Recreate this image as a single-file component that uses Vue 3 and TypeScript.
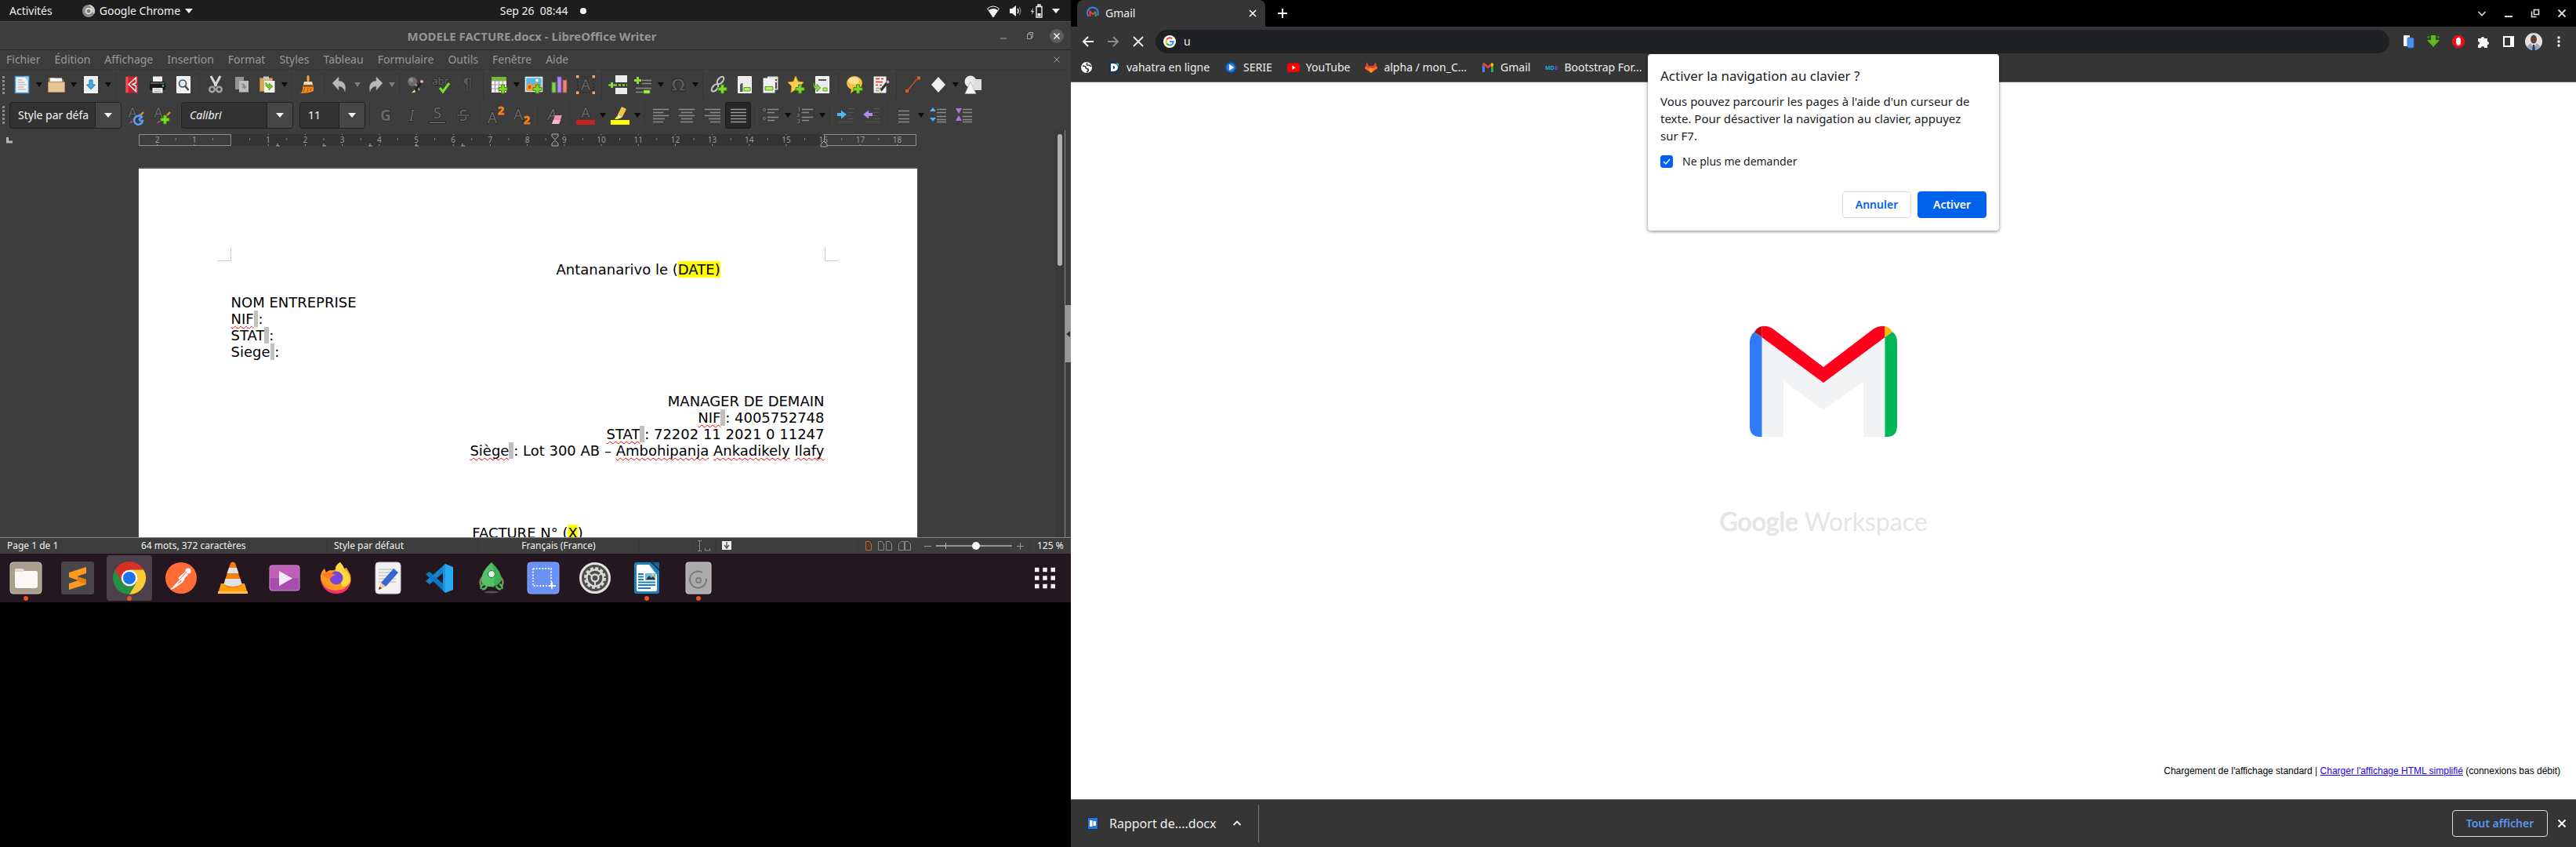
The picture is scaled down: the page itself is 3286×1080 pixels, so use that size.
<script setup lang="ts">
import { ref } from 'vue'

interface Tool { icon?: string; label?: string; menu?: boolean; dim?: boolean; sep?: boolean; active?: boolean }
interface DockApp { icon: string; label: string; running?: boolean; active?: boolean }
interface Bookmark { icon: string; label: string }

const plus = '<path d="M14.5 12h4v3.5H22v4h-3.5V23h-4v-3.5H11v-4h3.5z" fill="#7fd62c" stroke="#3f8a0b"/>'
const glyph = (char: string, x: number, y: number, size: number, extra = '') =>
  `<text x="${x}" y="${y}" text-anchor="middle" font-family="Noto Sans" font-size="${size}" fill="#696969" stroke="#262626" stroke-width="1.4" paint-order="stroke" ${extra}>${char}</text>`

const icons: Record<string, string> = {
  new: '<path d="M3.5 1.5h17v21h-17z" fill="#f2f2f2" stroke="#3f9bdc" stroke-width="1.6"/><path d="M15 1.5h5.5V8z" fill="#8fd0f5"/><path d="M6.5 6h6M6.5 9h9M6.5 12h11M6.5 15h8M6.5 18h11" stroke="#a9a9a9"/>',
  open: '<path d="M2 3h8l1 2h10v3H2z" fill="#a58250"/><path d="M4 3.5h15v6H4z" fill="#f5f5f5"/><path d="M1.5 8.5h21v13h-21z" fill="#e5c591" stroke="#b08b54"/>',
  save: '<path d="M3.5 1.5h17v21h-17z" fill="#efefef" stroke="#fff"/><path d="M10 6h4v6h3.5L12 18l-5.500-6H10z" fill="#43a9e8" stroke="#1b7dbf"/>',
  pdf: '<path d="M4 1.5h16v21H4z" fill="#c9242c"/><path d="M4.5 2h3v20h-3z" fill="#e4525a"/><path d="M17.5 3L8 11.5l9.5 9v-7L13 11.5l4.5-2z" fill="none" stroke="#fff" stroke-width="1.4"/>',
  print: '<path d="M6 1.5h12v8H6z" fill="#f0f0f0"/><rect x="2" y="8" width="20" height="11" rx="2" fill="#181818"/><path d="M3 9h18v2H3z" fill="#5b5b5b"/><circle cx="19" cy="13.5" r="1.3" fill="#35c2f3"/><path d="M5.5 16h13v6.5h-13z" fill="#efefef"/><path d="M7.5 18h9M7.5 20.5h9" stroke="#aaa"/>',
  preview: '<path d="M3.5 1.5h17v21h-17z" fill="#efefef" stroke="#fff"/><circle cx="11" cy="10.5" r="4.5" fill="#dceefa" stroke="#4a4a4a" stroke-width="1.6"/><path d="M14.5 14l4 5" stroke="#4a4a4a" stroke-width="2.4"/>',
  cut: '<path d="M6 1l7 13M18 1l-7 13" stroke="#d9d9d9" stroke-width="3"/><circle cx="7.5" cy="18" r="3.3" fill="none" stroke="#a3a3a3" stroke-width="2.4"/><circle cx="16.5" cy="18" r="3.3" fill="none" stroke="#a3a3a3" stroke-width="2.4"/>',
  copy: '<path d="M4 2h11v16H4z" fill="#929292"/><path d="M9 7h12v14.5H9z" fill="#bdbdbd"/><path d="M10 11q4 0 4 3h-2l4 4 3-4h-2q-1-5-7-3z" fill="#8b8b8b"/>',
  paste: '<path d="M2.5 3.5h16v17h-16z" fill="#d7a95a" stroke="#a47a35"/><path d="M7 1.5h7v4H7z" fill="#c8c8c8"/><path d="M8 7h13.5v15H8z" fill="#f2f2f2"/><path d="M10 9q-1 6 4 7v3l5-5-5-4v3q-2 0-4-4z" fill="#73cc1d" stroke="#3f8a0b" stroke-width=".7"/>',
  brush: '<rect x="10.5" y="0" width="3" height="8" rx="1.5" fill="#f5a33a"/><path d="M7 8h10l1 4H6z" fill="#f3dab2"/><path d="M5 12h14v3H5z" fill="#8a5a2a"/><path d="M5 15h14v5q-5 3-17 3 4-3 3-8z" fill="#f08a1c"/><path d="M8 16l-2 5M12 16l-1 5M16 16l-1 4" stroke="#a5500a"/>',
  undo: '<path d="M10 2v5q11 1 8 14-2-7-8-7v5L2 10z" fill="#b8b8b8" stroke="#8c8c8c" stroke-width=".6"/>',
  redo: '<path d="M14 2v5Q3 8 6 21q2-7 8-7v5l8-9z" fill="#b8b8b8" stroke="#8c8c8c" stroke-width=".6"/>',
  find: '<circle cx="8" cy="8" r="6" fill="#6e6e6e"/><circle cx="6.5" cy="6" r="2.5" fill="#8f8f8f"/><path d="M12 11l5 8" stroke="#9b9b9b" stroke-width="2"/><path d="M20 8l-9 12" stroke="#222" stroke-width="3"/><path d="M11 18l-4 4.5 5-1z" fill="#f5df8a"/><circle cx="20" cy="8" r="2" fill="#e4a7d8"/>',
  spell: glyph('abc', 11, 12, 13) + '<path d="M10 16l4 5 8-11" fill="none" stroke="#7be02c" stroke-width="3"/>',
  para: '<path d="M18 3h-8a5 5 0 000 9h1v10h2V5h2v17h2V5h1z" fill="#5a5a5a" stroke="#2a2a2a" stroke-width=".8"/>',
  table: '<path d="M2 2h19v20H2z" fill="#f1f1f1"/><path d="M2 2h19v5H2z" fill="#6cc21a"/><path d="M2 7h19M2 12h19M2 17h19M6.5 2v20M11.5 2v20M16.5 2v20" stroke="#9c9c9c"/>' + plus,
  image: '<path d="M1.5 2.5h21v18h-21z" fill="#58b7ee" stroke="#eee" stroke-width="1.6"/><path d="M2.5 13l4-3 4 3 5-4 6 5v6h-19z" fill="#f39a2d"/><path d="M5 13h3v4H5z" fill="#d54c1a"/><circle cx="16" cy="6.5" r="2" fill="#fff3b0"/>' + plus,
  chart: '<rect x="2" y="9" width="5" height="13" fill="#7fd24e" stroke="#4b8f22"/><rect x="9" y="2" width="5" height="20" fill="#b58be6" stroke="#7d52b3"/><rect x="16" y="6" width="5" height="16" fill="#e5897d" stroke="#a84b3f"/>',
  frame: '<path d="M2 2h20v20H2z" fill="none" stroke="#1f1f1f" stroke-dasharray="2 2"/>' + glyph('A', 12, 19, 19) + '<path d="M0 0h3.5v3.5H0zM20.5 0H24v3.5h-3.5zM0 20.5h3.5V24H0zM20.5 20.5H24V24h-3.5z" fill="#f4a26a"/>',
  break: '<path d="M9 0h15v9H9zM9 16h15v8H9z" fill="#ececec"/><path d="M8 12.5h16" stroke="#7fd62c" stroke-width="2.4" stroke-dasharray="3 2"/><path d="M3 9h3v2.5h2v2H6V16H3v-2.500H0v-2h3z" fill="#8be03a"/>',
  field: '<path d="M10 6.5h12M10 10.5h12M2 16.5h20M2 21.5h9" stroke="#8c8c8c" stroke-width="1.5"/><path d="M3 2h3v3h3v3H6v3H3V8H0V5h3z" fill="#8be03a"/><path d="M12 19h8v4h-8z" fill="#b5f06a" stroke="#5aa416"/>',
  omega: '<text x="12" y="20" text-anchor="middle" font-family="DejaVu Sans" font-size="22" font-weight="700" fill="#5a5a5a" stroke="#2a2a2a" stroke-width="1">Ω</text>',
  link: '<g fill="none" stroke="#c4c4c4" stroke-width="2.2"><ellipse cx="14" cy="6.5" rx="5.5" ry="3" transform="rotate(-50 14 6.5)"/><ellipse cx="7" cy="16" rx="5.5" ry="3" transform="rotate(-50 7 16)"/></g>' + plus,
  footnote: '<path d="M3.5 1.5h17v21h-17z" fill="#ececec" stroke="#fff"/><path d="M6 12l2-2h1.5v11H6z" fill="#555"/><path d="M11 15.5h8v4.5h-8z" fill="#b5f06a" stroke="#5aa416"/>',
  endnote: '<path d="M8 1.5h13.5v17H8z" fill="#ddd"/><path d="M2.5 3.5h15v19h-15z" fill="#f1f1f1"/><path d="M5 14.5h10V19H5z" fill="#b5f06a" stroke="#5aa416"/><path d="M19 5v2M19 9v8" stroke="#444" stroke-width="2"/>',
  bookmark: '<path d="M11 1l3 7 7 1-5 5 1 8-6-4-6 4 1-8-5-5 7-1z" fill="#fbcf55" stroke="#d79a1c"/>' + plus,
  xref: '<path d="M3.5 1.5h17v21h-17z" fill="#ececec" stroke="#fff"/><path d="M7 6h10" stroke="#555" stroke-width="2"/><path d="M1 9q0 5 4 5v-3l5 5-5 5v-3q-5-1-4-9z" fill="#8bd84a" stroke="#4a9016" stroke-width=".8"/><path d="M13 16h5v4h-5z" fill="#b5f06a" stroke="#5aa416"/>',
  comment: '<path d="M12 1a10 9 0 0110 9q-1 8-10 9l-5 4 1-5Q2 15 2 10a10 9 0 0110-9z" fill="#f5be3e"/><ellipse cx="11" cy="7" rx="7" ry="4.5" fill="#fbe08f"/>' + plus,
  track: '<path d="M3.5 1.5h16v21h-16z" fill="#f1f1f1"/><path d="M6 4.5h5M13 4.5h3M6 8.5h9M6 12.5h3M11 12.5h3" stroke="#d22" stroke-width="1.6"/><path d="M6 16.5h7M6 19.5h4" stroke="#999" stroke-width="1.4"/><path d="M21 9l-9 11" stroke="#333" stroke-width="3.4"/><path d="M12 18l-4 5 6-2z" fill="#f5df8a"/><circle cx="21.5" cy="8.5" r="2" fill="#d69ace"/>',
  line: '<path d="M5 20L19 3.5" stroke="#b9541a" stroke-width="1.6"/><path d="M3 18h4v4H3zM18 1.5h4v4h-4z" fill="#e0620d"/>',
  diamond: '<path d="M12 2l9 10-9 10-9-10z" fill="#efefef"/>',
  shapes: '<circle cx="9" cy="8" r="7.5" fill="#eaeaea"/><path d="M12 5h11v14H12z" fill="#dedede"/><path d="M9 8l7 15.5H2z" fill="#f5f5f5" stroke="#aaa" stroke-width=".7"/>',
  styleUpd: glyph('A', 8, 15, 18) + '<path d="M22 8l-5 5" stroke="#f08a1c" stroke-width="2.4"/><path d="M4 23l5-3-3-1z" fill="#c63fb4"/><path d="M19 14a5.5 5.5 0 102 5h-4M16 11l4 3-4 4" fill="none" stroke="#5b9df2" stroke-width="2.6"/>',
  styleNew: glyph('A', 8, 15, 18) + '<path d="M23 8l-4 4" stroke="#f08a1c" stroke-width="2.4"/><path d="M6 23l5-3-3-1z" fill="#c63fb4"/>' + plus,
  bold: glyph('G', 12, 19, 19, 'font-weight="700"'),
  italic: glyph('I', 12, 19, 19, 'font-style="italic"'),
  under: glyph('S', 12, 16, 19) + '<path d="M1 21.5h22" stroke="#222" stroke-width="3"/><path d="M2 21.5h20" stroke="#8a8a8a"/>',
  strike: glyph('S', 12, 19, 19) + '<path d="M3 12h18" stroke="#222" stroke-width="3"/><path d="M4 12h16" stroke="#8a8a8a"/>',
  sup: glyph('A', 8, 22, 19) + '<text x="19" y="11" text-anchor="middle" font-family="Noto Sans" font-size="14" font-weight="700" fill="#f5a040" stroke="#e8700a">2</text>',
  sub: glyph('A', 8, 18, 19) + '<text x="19" y="23" text-anchor="middle" font-family="Noto Sans" font-size="14" font-weight="700" fill="#f5a040" stroke="#e8700a">2</text>',
  clear: glyph('A', 10, 18, 19, 'font-style="italic"') + '<path d="M14 12h9l-4 11h-9z" fill="#f78fb3"/><path d="M12 18h9l-2 5h-9z" fill="#fbb9cf"/>',
  color: glyph('A', 12, 15, 18) + '<path d="M0 18h24v6H0z" fill="#c9211e"/>',
  mark: '<path d="M14 1l6 3-5 10-6-3z" fill="#f0c63a"/><path d="M9 11l6 3-3 2H8z" fill="#f6e6b4"/><path d="M8 13l-3 4h5z" fill="#ff0"/><path d="M0 18h24v6H0z" fill="#ff0"/>',
  left: '<path d="M2 4.5h20M2 8.5h13M2 12.5h20M2 16.5h15M2 20.5h13" stroke="#8c8c8c" stroke-width="1.5"/>',
  center: '<path d="M2 4.5h20M5 8.5h14M2 12.5h20M5 16.5h14M4 20.5h16" stroke="#8c8c8c" stroke-width="1.5"/>',
  right: '<path d="M2 4.5h20M9 8.5h13M2 12.5h20M7 16.5h15M9 20.5h13" stroke="#8c8c8c" stroke-width="1.5"/>',
  just: '<path d="M2 4.5h20M2 8.5h20M2 12.5h20M2 16.5h20M2 20.5h20" stroke="#9a9a9a" stroke-width="1.5"/>',
  bullets: '<path d="M8 4.5h14M8 8.5h9M8 14.5h14M8 18.5h9" stroke="#8c8c8c" stroke-width="1.5"/><circle cx="4" cy="5" r="1.5" fill="none" stroke="#777"/><circle cx="4" cy="16" r="1.5" fill="none" stroke="#777"/>',
  numbers: '<path d="M8 4.5h14M8 8.5h9M8 14.5h14M8 18.5h9" stroke="#8c8c8c" stroke-width="1.5"/><path d="M3 2h1.5v5M2.5 10.5h2l-2 3h2M2.5 17.5h2v4h-2" stroke="#777" fill="none"/>',
  indent: '<path d="M14 3.5h8M14 8.5h8M14 12.5h5M14 16.5h8M3 20.5h19" stroke="#555" stroke-width="1.2"/><path d="M1 9h5V5.5l7 5.5-7 5.5V13H1z" fill="#4fb3ef"/>',
  outdent: '<path d="M14 3.5h8M14 8.5h8M14 12.5h5M14 16.5h8M3 20.5h19" stroke="#555" stroke-width="1.2"/><path d="M13 9H8V5.5L1 11l7 5.5V13h5z" fill="#b48be8"/>',
  spacing: '<path d="M5 6.5h14M5 11.5h14M5 16.5h14M5 20.5h14" stroke="#8c8c8c" stroke-width="1.5"/>',
  incSp: '<path d="M10 4.5h12M10 8.5h12M10 13.5h12M10 17.5h12M10 20.5h12" stroke="#8c8c8c" stroke-width="1.3"/><path d="M5 2l4 5H1zM5 20l4-5H1z" fill="#4fb3ef"/>',
  decSp: '<path d="M10 4.5h12M10 8.5h12M10 13.5h12M10 17.5h12M10 20.5h12" stroke="#8c8c8c" stroke-width="1.3"/><path d="M1 3h8L5 10zM5 12l4 7H1z" fill="#a678dc"/>',
}

const dockIcons: Record<string, string> = {
  files: '<rect x="1" y="1" width="40" height="40" rx="4" fill="#a79f8d" stroke="#c9c2b2"/><path d="M7 11q0-2 2-2h7q2 0 3 3h15q2 0 2 2v17q0 3-3 3H10q-3 0-3-3z" fill="#f9f8f5"/><path d="M7 13V11q0-2 2-2h7q2 0 3 3v1z" fill="#dfdbd3"/>',
  sublime: '<rect width="42" height="42" rx="3" fill="#474747"/><path d="M10 14l22-7v8l-12 4 12 4v6l-22 7v-8l12-4-12-4z" fill="#ff9920"/><path d="M20 19l12 4v6l-10-4z" fill="#ea7d10"/>',
  chrome: '<g transform="translate(21 21)"><path d="M-18.200-10.500A21 21 0 0118.200-10.500H0L-9.100 5.250z" fill="#d93025"/><path d="M18.200-10.500A21 21 0 010 21L9.100 5.250 0-10.500z" fill="#fcc934"/><path d="M0 21A21 21 0 01-18.200-10.500L-9.100 5.250H9.100z" fill="#259042"/><circle r="10.3" fill="#fff"/><circle r="8" fill="#1a73e8"/></g>',
  postman: '<circle cx="21" cy="21" r="20" fill="#ff6c37"/><circle cx="30" cy="12" r="3.6" fill="#fff"/><path d="M27 16L10 34l-2 1M25 22l-3 4-11 8" fill="none" stroke="#fff" stroke-width="1.8"/><path d="M26 13l4 4-8 8-5-4z" fill="#fff"/><path d="M28 13l-8 9" stroke="#ff6c37" stroke-width="1"/>',
  vlc: '<path d="M6 28h30l4 13H2z" fill="#ff9d0a"/><path d="M2 38h38v3H2z" fill="#ffc14a"/><path d="M18 2q3-3 6 0l9 28q-12 7-24 0z" fill="#f47f0c"/><path d="M16 8h10l2.5 7h-15zM11.500 22h19l2 7q-11 6-23 0z" fill="#dfe3e6"/>',
  player: '<rect x="2" y="5" width="38" height="32" rx="3" fill="#a84cae" stroke="#d193d3"/><path d="M3 6h36v15H3z" fill="#c05fb8"/><path d="M14 12l17 9.5L14 31z" fill="#f7e9f7"/>',
  firefox: '<path d="M26 1q3 3 5 8l3-1 5 9q3 15-9 21-9 4-18 0Q0 31 1 18q1-6 5-9l2 5q3-3 6-3 3 1 6-1 0-6 6-9z" fill="#ff9a1f"/><path d="M26 1q3 3 5 8 8 8 8 16-2 8-10 7-6-12-9-22 0-6 6-9z" fill="#ffd93d"/><path d="M1 20q3 16 18 17 14 1 20-12-2 15-17 16Q3 41 1 20z" fill="#ff2d6c"/><circle cx="21" cy="21" r="8.5" fill="#7b45dc"/><path d="M2 16q7-3 13-1l6 2q-7 1-8 6-6-3-11-7z" fill="#ff7b26"/>',
  editor: '<rect x="5" y="1" width="32" height="40" rx="4" fill="#f1f1f1" stroke="#cfcfcf"/><path d="M9 10h22M9 14h22M9 18h22M9 22h22M9 26h22" stroke="#c9c9c9" stroke-width="1.4"/><path d="M28 9l6 5-16 18-6-5z" fill="#3765d3"/><path d="M12 27l6 5-9 4z" fill="#f5c9a0"/><path d="M10 32l3 2-4 2z" fill="#333"/>',
  vscode: '<path d="M28 3l10 4v29l-10 4z" fill="#29a9f2"/><path d="M28 3v9L8 29l-5-4z" fill="#1184cf"/><path d="M28 40v-9L8 13l-5 3z" fill="#0b78bf"/><path d="M28 3v37l-3-3V6z" fill="#1b94dd"/>',
  rocket: '<ellipse cx="21" cy="39" rx="9" ry="1.5" fill="#5b5058"/><path d="M9 20q-5 7 0 12M33 20q5 7 0 12" fill="none" stroke="#8f8160" stroke-width="2.4"/><path d="M21 1q13 12 13 23-5 8-13 8T8 24Q8 13 21 1z" fill="#3fae52"/><path d="M21 1q5 12 3 31-1 1-3 0Q8 32 8 24 8 13 21 1z" fill="#56c068"/><circle cx="21" cy="16" r="4.5" fill="#d9f2ee" stroke="#29733a"/><path d="M11 29q-5 2-3 6M15 31q-2 5-6 4M31 29q5 2 3 6M27 31q2 5 6 4" fill="none" stroke="#48b85c" stroke-width="2.6"/>',
  shot: '<rect x="1" y="1" width="40" height="40" rx="4" fill="#6a91f4" stroke="#86a9fb"/><path d="M8 9h23v22M8 9v22h22" fill="none" stroke="#fff" stroke-width="1.8" stroke-dasharray="1.8 2"/><path d="M32 26v9M28 31h9" stroke="#fff" stroke-width="1.8"/>',
  settings: '<circle cx="21" cy="21" r="18.5" fill="#4d4d4d" stroke="#e2e2df" stroke-width="3"/><circle cx="21" cy="21" r="12.5" fill="none" stroke="#d8d8d4" stroke-width="3" stroke-dasharray="3.900 2.640"/><circle cx="21" cy="21" r="10.5" fill="none" stroke="#d8d8d4" stroke-width="2.4"/><circle cx="21" cy="21" r="4.5" fill="none" stroke="#d8d8d4" stroke-width="2.4"/><path d="M24 19l7-5M21 25v8M18 19l-7-5" stroke="#d8d8d4" stroke-width="2"/>',
  writer: '<path d="M8 1h18l11 11v26q0 3-3 3H8q-3 0-3-3V4q0-3 3-3z" fill="#1d84b8"/><path d="M10 4h14l10 13v19q0 2-2 2H10q-2 0-2-2V6q0-2 2-2z" fill="#fff"/><path d="M28 1h9v9z" fill="#0f6a9c"/><path d="M10 16h7M10 19.500h7M10 23h7M10 26.500h22M10 30h22M10 34h16" stroke="#1d7fb3" stroke-width="1.8"/><path d="M19 15h13v9H19z" fill="#6db6dd"/><path d="M20 23l4-5 3 3 2-2 3 4z" fill="#333"/><circle cx="29" cy="17" r="1.5" fill="#f4d33d"/>',
  disk: '<rect x="5" y="1" width="32" height="40" rx="3" fill="#ababab" stroke="#c9c9c9"/><path d="M26 14a10.500 10.500 0 105 8" fill="none" stroke="#7a7a7a" stroke-width="2"/><circle cx="21" cy="24" r="3" fill="none" stroke="#7a7a7a" stroke-width="1.8"/>',
}

const markIcons: Record<string, string> = {
  globe: '<circle cx="8" cy="8" r="7" fill="#fff"/><path d="M3 6q4 0 4 2t3 2q1 3-2 4M9 2q-2 3 1 3t4 2" fill="none" stroke="#353535" stroke-width="1.6"/>',
  d: '<rect x="1" y="0" width="14" height="16" fill="#1c3556"/><path d="M4 3h4q5 1 5 5t-5 5H4zM7 6v4q2 0 2-2t-2-2z" fill="#fff" fill-rule="evenodd"/><path d="M10 2l4 1v4z" fill="#2fc3bd"/>',
  serie: '<circle cx="8" cy="8" r="7.5" fill="#0b4c9b"/><circle cx="8" cy="8" r="5.5" fill="#2f7fd9"/><path d="M6 4l6 4-6 4z" fill="#fff"/>',
  yt: '<rect y="2.5" width="16" height="11.5" rx="3" fill="#f00"/><path d="M6.5 5.500l4 2.700-4 2.700z" fill="#fff"/>',
  gitlab: '<path d="M8 15L0 9l2.500-8L5 6h6l2.500-5L16 9z" fill="#e24329"/><path d="M8 15L0 9l1-2 4 2h6l4-2 1 2z" fill="#fc6d26"/><path d="M8 15l-3-6h6z" fill="#fca326"/>',
  gmail: '<path d="M1 4v10h3V7z" fill="#4285f4"/><path d="M15 4v10h-3V7z" fill="#34a853"/><path d="M1 4q0-2 2-2l5 4 5-4v3.500l-5 4-5-4z" fill="#ea4335"/><path d="M12 3q3-2 3 1v1.500l-3 2z" fill="#fbbc04"/>',
  mdb: '<text x="0" y="11" font-family="Noto Sans" font-size="7" font-weight="700" fill="#17b1d8">MD<tspan fill="#7046b8">B</tspan></text>',
}

const S: Tool = { sep: true }
const t = (icon: string, label: string, menu = false, dim = false): Tool => ({ icon, label, menu, dim })
const standardBar: Tool[] = [
  t('new', 'Nouveau', true), t('open', 'Ouvrir', true), t('save', 'Enregistrer', true), S,
  t('pdf', 'PDF'), t('print', 'Imprimer'), t('preview', 'Aperçu'), S,
  t('cut', 'Couper'), t('copy', 'Copier'), t('paste', 'Coller', true), S,
  t('brush', 'Cloner'), S, t('undo', 'Annuler', true, true), t('redo', 'Rétablir', true, true), S,
  t('find', 'Rechercher'), t('spell', 'Orthographe'), t('para', 'Marques'), S,
  t('table', 'Tableau', true), t('image', 'Image'), t('chart', 'Diagramme'), t('frame', 'Zone de texte'), S,
  t('break', 'Saut de page'), t('field', 'Champ', true), t('omega', 'Symbole', true), S,
  t('link', 'Hyperlien'), t('footnote', 'Note de bas de page'), t('endnote', 'Note de fin'), t('bookmark', 'Repère'), t('xref', 'Renvoi'), S,
  t('comment', 'Commentaire'), t('track', 'Suivi'), S,
  t('line', 'Ligne'), t('diamond', 'Formes', true), t('shapes', 'Dessin'),
]
const formatBar: Tool[] = [
  S, t('bold', 'Gras'), t('italic', 'Italique'), t('under', 'Souligné'), t('strike', 'Barré'), S,
  t('sup', 'Exposant'), t('sub', 'Indice'), S, t('clear', 'Effacer'), S,
  t('color', 'Couleur', true), t('mark', 'Surlignage', true), S,
  t('left', 'Gauche'), t('center', 'Centre'), t('right', 'Droite'), { icon: 'just', label: 'Justifié', active: true }, S,
  t('bullets', 'Puces', true), t('numbers', 'Numérotation', true), S,
  t('indent', 'Augmenter le retrait'), t('outdent', 'Diminuer le retrait'), S,
  t('spacing', 'Interligne', true), t('incSp', 'Augmenter'), t('decSp', 'Diminuer'),
]
const menus = ['Fichier', 'Édition', 'Affichage', 'Insertion', 'Format', 'Styles', 'Tableau', 'Formulaire', 'Outils', 'Fenêtre', 'Aide']
const dock: DockApp[] = [
  { icon: 'files', label: 'Fichiers', running: true }, { icon: 'sublime', label: 'Sublime Text' },
  { icon: 'chrome', label: 'Google Chrome', running: true, active: true }, { icon: 'postman', label: 'Postman' },
  { icon: 'vlc', label: 'VLC' }, { icon: 'player', label: 'Vidéos' }, { icon: 'firefox', label: 'Firefox' },
  { icon: 'editor', label: 'Éditeur de texte' }, { icon: 'vscode', label: 'Visual Studio Code' },
  { icon: 'rocket', label: 'Robo 3T' }, { icon: 'shot', label: 'Capture' }, { icon: 'settings', label: 'Paramètres' },
  { icon: 'writer', label: 'LibreOffice Writer', running: true }, { icon: 'disk', label: 'Disques', running: true },
]
const bookmarks: Bookmark[] = [
  { icon: 'globe', label: '' }, { icon: 'd', label: 'vahatra en ligne' }, { icon: 'serie', label: 'SERIE' },
  { icon: 'yt', label: 'YouTube' }, { icon: 'gitlab', label: 'alpha / mon_C...' }, { icon: 'gmail', label: 'Gmail' },
  { icon: 'mdb', label: 'Bootstrap For...' },
]

// Ruler geometry: the zero mark sits on the left margin, one centimetre apart.
const ZERO = 118
const CM = 47.2
const rulerNumbers = [-2, -1, ...Array.from({ length: 18 }, (_, i) => i + 1)].map(n => ({ n: Math.abs(n), x: ZERO + n * CM }))
const rulerHalves = Array.from({ length: 20 }, (_, i) => ZERO + (i - 1.5) * CM)
const tabStops = [0, 1, 2, 3, 4].map(i => 177 + i * 59)

const paragraphStyle = ref('Style par défaut')
const fontName = ref('Calibri')
const fontSize = ref('11')
const zoom = ref(53)
const address = ref('u')
const neverAsk = ref(true)
</script>

<template>
  <div class="desktop">
    <section class="laptop">
      <header class="topbar">
        <button class="tb-btn">Activités</button>
        <button class="tb-btn app">
          <svg width="16" height="16" viewBox="0 0 16 16"><circle cx="8" cy="8" r="8" fill="#8b8b8b" /><path d="M8 0a8 8 0 017 12L11 8V4z" fill="#c9c9c9" /><circle cx="8" cy="8" r="4" fill="#eee" /><circle cx="8" cy="8" r="2.6" fill="#7a7a7a" /></svg>
          Google Chrome
          <i class="tri light"></i>
        </button>
        <span class="clock">Sep 26&nbsp; 08:44 <i class="dot"></i></span>
        <button class="tray" aria-label="Système">
          <svg width="18" height="18" viewBox="0 0 18 18"><path d="M1.500 6q7.500-6 15 0L9 17z" fill="none" stroke="#eee" /><path d="M3 8q6-4 12 0l-6 9z" fill="#f2f2f2" /></svg>
          <svg width="18" height="18" viewBox="0 0 18 18"><path d="M2 6h3l5-4v14l-5-4H2z" fill="#f2f2f2" /><path d="M12 6q2 3 0 6" fill="none" stroke="#ddd" stroke-width="1.5" /><path d="M14.500 4q3 5 0 10" fill="none" stroke="#999" /></svg>
          <svg width="18" height="18" viewBox="0 0 18 18"><path d="M4 5L1 10h2l-1 4 3-5H3z" fill="#eee" /><path d="M8 3.500h7V17H8zM10 1h3v2h-3z" fill="none" stroke="#eee" stroke-width="1.4" /><path d="M9.500 12h4v3.500h-4z" fill="#fff" /></svg>
          <i class="tri light"></i>
        </button>
      </header>

      <main class="writer">
        <div class="titlebar">
          <span></span>
          <h1>MODELE FACTURE.docx - LibreOffice Writer</h1>
          <div class="win">
            <button aria-label="Réduire"><svg width="18" height="18" viewBox="0 0 18 18"><path d="M5 12h8" stroke="#a5a5a5" /></svg></button>
            <button aria-label="Restaurer"><svg width="18" height="18" viewBox="0 0 18 18"><path d="M5.500 6.500h5v6h-5zM7.500 6V4.500h5V11H11" fill="none" stroke="#a5a5a5" /></svg></button>
            <button class="round" aria-label="Fermer"><svg width="18" height="18" viewBox="0 0 18 18"><path d="M5.500 5.500l7 7M12.500 5.500l-7 7" stroke="#fff" stroke-width="1.4" /></svg></button>
          </div>
        </div>
        <nav class="menubar">
          <button v-for="m in menus" :key="m">{{ m }}</button>
          <button class="closedoc" aria-label="Fermer le document"><svg width="18" height="18" viewBox="0 0 18 18"><path d="M5.500 5.500l7 7M12.500 5.500l-7 7" stroke="#a5a5a5" /></svg></button>
        </nav>
        <div class="toolbar">
          <i class="grip"></i>
          <template v-for="(b, i) in standardBar" :key="i">
            <i v-if="b.sep" class="sep"></i>
            <button v-else class="tool" :aria-label="b.label">
              <span class="pic"><svg width="24" height="24" viewBox="0 0 24 24" v-html="icons[b.icon!]"></svg></span>
              <span v-if="b.menu" class="drop"><i class="tri" :class="{ dim: b.dim }"></i></span>
            </button>
          </template>
        </div>
        <div class="toolbar format">
          <i class="grip"></i>
          <div class="combos">
            <div class="combo wide"><input v-model="paragraphStyle" aria-label="Style de paragraphe"><button aria-label="Styles"><i class="tri light"></i></button></div>
          </div>
          <button class="tool" aria-label="Actualiser le style"><span class="pic"><svg width="24" height="24" viewBox="0 0 24 24" v-html="icons.styleUpd"></svg></span></button>
          <button class="tool" aria-label="Nouveau style"><span class="pic"><svg width="24" height="24" viewBox="0 0 24 24" v-html="icons.styleNew"></svg></span></button>
          <i class="sep"></i>
          <div class="combos">
            <div class="combo wide"><input v-model="fontName" class="it" aria-label="Police"><button aria-label="Polices"><i class="tri light"></i></button></div>
            <div class="combo size"><input v-model="fontSize" aria-label="Taille"><button aria-label="Tailles"><i class="tri light"></i></button></div>
          </div>
          <template v-for="(b, i) in formatBar" :key="i">
            <i v-if="b.sep" class="sep"></i>
            <button v-else class="tool" :aria-label="b.label">
              <span class="pic" :class="{ on: b.active }"><svg width="24" height="24" viewBox="0 0 24 24" v-html="icons[b.icon!]"></svg></span>
              <span v-if="b.menu" class="drop"><i class="tri"></i></span>
            </button>
          </template>
        </div>

        <div class="docarea">
          <div class="canvas">
            <div class="rulerrow">
              <svg class="tabkind" width="8" height="8" viewBox="0 0 8 8"><path d="M1.500 0v6H8" fill="none" stroke="#b5b5b5" stroke-width="3" /></svg>
              <svg class="ruler" width="993" height="18" viewBox="0 0 993 18">
                <path d="M118 0h756v15H118z" fill="#333" />
                <path d="M.5.5h117v14H.5zM874.500.5h117v14h-117z" fill="none" stroke="#909090" />
                <g v-for="r in rulerNumbers" :key="r.x">
                  <path :d="`M${r.x} 0v1M${r.x} 13v2`" stroke="#999" />
                  <text :x="r.x" y="11" text-anchor="middle" font-size="10" fill="#9a9a9a">{{ r.n }}</text>
                </g>
                <path v-for="x in rulerHalves" :key="x" :d="`M${x} 5v3`" stroke="#888" />
                <path v-for="x in tabStops" :key="x" :d="`M${x} 12v3M${x - 2} 15h5`" stroke="#aaa" fill="none" />
                <path d="M527 0h8v3l-4 4-4-4zM531 8l4 4v3h-8v-3zM874 9l4 4v3h-8v-3z" fill="#3d3d3d" stroke="#aaa" />
              </svg>
            </div>
            <article class="page">
              <div class="corners"><i></i><i></i></div>
              <p class="date">Antananarivo le (<mark>DATE)</mark></p>
              <p>&nbsp;</p>
              <p>NOM ENTREPRISE</p>
              <p><u>NIF</u><b>&nbsp;</b>:</p>
              <p>STAT<b>&nbsp;</b>:</p>
              <p>Siege<b>&nbsp;</b>:</p>
              <p>&nbsp;</p>
              <p>&nbsp;</p>
              <p class="end">MANAGER DE DEMAIN</p>
              <p class="end"><u>NIF</u><b>&nbsp;</b>: 4005752748</p>
              <p class="end"><u>STAT</u><b>&nbsp;</b>: 72202 11 2021 0 11247</p>
              <p class="end"><u>Siège</u><b>&nbsp;</b>: Lot 300 AB – <u>Ambohipanja</u> <u>Ankadikely</u> <u>Ilafy</u></p>
              <p>&nbsp;</p>
              <p>&nbsp;</p>
              <p>&nbsp;</p>
              <p>&nbsp;</p>
              <p class="heading">FACTURE N° (<mark>X</mark>)</p>
            </article>
          </div>
          <div class="scroll"><i></i></div>
          <div class="sidebar"><button aria-label="Volet latéral"></button></div>
        </div>

        <footer class="status">
          <span>Page 1 de 1</span>
          <span>64 mots, 372 caractères</span>
          <span>Style par défaut</span>
          <span class="mid">Français (France)</span>
          <span></span>
          <span class="mid"><svg width="18" height="14" viewBox="0 0 18 14"><path d="M1 .5h5M1 13.500h5M3.500 1v12M10.500 10v3h6v-3" fill="none" stroke="#8a8a8a" /></svg></span>
          <span class="mid"><svg width="12" height="12" viewBox="0 0 12 12"><path d="M0 0h12v11H0z" fill="#eee" /><path d="M6 1v7M3 5l3 4 3-4" stroke="#555" stroke-width="1.4" fill="none" /></svg></span>
          <span></span>
          <span></span>
          <span class="mid views">
            <svg width="8" height="12" viewBox="0 0 8 12"><path d="M.5.5H5L7.500 4v7.500h-7z" fill="none" stroke="#d8600e" /></svg>
            <svg width="18" height="12" viewBox="0 0 18 12"><path d="M.5.5H5L7.500 4v7.500h-7zM10.500.5H15L17.500 4v7.500h-7z" fill="none" stroke="#8a8a8a" /></svg>
            <svg width="16" height="12" viewBox="0 0 16 12"><path d="M7.500.5h-4L.5 4v7.500h7zM8.500.5h4L15.500 4v7.500h-7z" fill="none" stroke="#8a8a8a" /></svg>
          </span>
          <span class="mid zoomer">
            <button aria-label="Zoom arrière"><svg width="9" height="9" viewBox="0 0 9 9"><path d="M0 4.500h9" stroke="#999" /></svg></button>
            <input v-model="zoom" type="range" min="0" max="100" aria-label="Zoom">
            <button aria-label="Zoom avant"><svg width="9" height="9" viewBox="0 0 9 9"><path d="M0 4.500h9M4.500 0v9" stroke="#999" /></svg></button>
          </span>
          <span>125 %</span>
        </footer>
      </main>

      <nav class="dock">
        <button v-for="a in dock" :key="a.icon" class="launcher" :class="{ active: a.active, running: a.running }" :aria-label="a.label">
          <svg width="42" height="42" viewBox="0 0 42 42" v-html="dockIcons[a.icon]"></svg>
        </button>
        <button class="launcher apps" aria-label="Applications">
          <svg width="28" height="28" viewBox="0 0 28 28"><path d="M1 3.500h26M1 14h26M1 24.500h26" stroke="#f2f2f2" stroke-width="5.500" stroke-dasharray="5.500 4.750" /></svg>
        </button>
      </nav>
    </section>

    <section class="browser">
      <header class="tabs">
        <div class="tab">
          <svg width="16" height="16" viewBox="0 0 16 16"><path d="M2.500 12A7 7 0 1114 11" fill="none" stroke="#3f7df0" stroke-width="2" /><path d="M4.500 12V6l3.500 3 3.500-3" fill="none" stroke="#ea4335" stroke-width="2" /><path d="M11.500 6v6" stroke="#34a853" stroke-width="2" /></svg>
          <span>Gmail</span>
          <button aria-label="Fermer l'onglet"><svg width="10" height="10" viewBox="0 0 10 10"><path d="M1 1l8 8M9 1L1 9" stroke="#fff" stroke-width="1.6" /></svg></button>
        </div>
        <button class="newtab" aria-label="Nouvel onglet"><svg width="12" height="12" viewBox="0 0 12 12"><path d="M6 0v12M0 6h12" stroke="#fff" stroke-width="1.8" /></svg></button>
        <div class="wm">
          <button aria-label="Onglets"><svg width="12" height="12" viewBox="0 0 12 12"><path d="M1.500 4L6 8.500 10.500 4" fill="none" stroke="#ddd" stroke-width="1.6" /></svg></button>
          <button aria-label="Réduire"><svg width="12" height="12" viewBox="0 0 12 12"><path d="M1 10h10" stroke="#ddd" stroke-width="2" /></svg></button>
          <button aria-label="Restaurer"><svg width="12" height="12" viewBox="0 0 12 12"><path d="M4.500 1.500h6v6h-6zM1.500 3.500v7h6" fill="none" stroke="#ddd" stroke-width="1.6" /></svg></button>
          <button aria-label="Fermer"><svg width="12" height="12" viewBox="0 0 12 12"><path d="M1.500 1.500l9 9M10.500 1.500l-9 9" stroke="#ddd" stroke-width="1.8" /></svg></button>
        </div>
      </header>
      <div class="nav">
        <button aria-label="Retour"><svg width="16" height="16" viewBox="0 0 16 16"><path d="M15 8H2M8 2L2 8l6 6" fill="none" stroke="#fff" stroke-width="2" /></svg></button>
        <button aria-label="Avancer"><svg width="16" height="16" viewBox="0 0 16 16"><path d="M1 8h13M8 2l6 6-6 6" fill="none" stroke="#8b8b8b" stroke-width="2" /></svg></button>
        <button aria-label="Arrêter"><svg width="16" height="16" viewBox="0 0 16 16"><path d="M2 2l12 12M14 2L2 14" stroke="#eee" stroke-width="1.8" /></svg></button>
        <label class="omni">
          <svg width="16" height="16" viewBox="0 0 16 16"><circle cx="8" cy="8" r="8" fill="#fff" /><g fill="none" stroke-width="2"><path d="M4.300 5.500a4.700 4.700 0 017-1.200" stroke="#ea4335" /><path d="M4.300 10.500a4.700 4.700 0 010-5" stroke="#fbbc04" /><path d="M11.300 11.500a4.700 4.700 0 01-7-1" stroke="#34a853" /><path d="M8 8h4.700a4.700 4.700 0 01-1.400 3.500" stroke="#4285f4" /></g></svg>
          <input v-model="address" aria-label="Adresse">
        </label>
        <div class="exts">
          <button aria-label="Extension copie"><svg width="16" height="16" viewBox="0 0 16 16"><rect x="2" y="0" width="8" height="14" rx="1" fill="#f4f6fa" /><rect x="7" y="3" width="8" height="13" rx="1" fill="#4a90f0" stroke="#2d5fb0" stroke-width=".8" /></svg></button>
          <button aria-label="Téléchargeur"><svg width="16" height="16" viewBox="0 0 16 16"><path d="M5 0h6v6h5l-8 9-8-9h5z" fill="#63b71c" /><path d="M1 1v3M3 1v3M13 1v3M15 1v3" stroke="#4f9a12" /></svg></button>
          <button aria-label="Bloqueur"><svg width="16" height="16" viewBox="0 0 16 16"><path d="M5 0h6l5 5v6l-5 5H5l-5-5V5z" fill="#ee0d12" /><path d="M5 8V4h1.500V3H8V2.500h1.500V4H11v5q0 4-3 4T5 8z" fill="#fff" /></svg></button>
          <button aria-label="Extensions"><svg width="16" height="16" viewBox="0 0 16 16"><path d="M1 4h4a2 2 0 114 0h4v4a2 2 0 110 4v4H9a2 2 0 10-4 0H1v-4a2 2 0 100-4z" fill="#fff" /></svg></button>
          <button aria-label="Panneau latéral"><svg width="16" height="16" viewBox="0 0 16 16"><path d="M2 2h12v12H2z" fill="none" stroke="#fff" stroke-width="2" /><path d="M10 2h4v12h-4z" fill="#fff" /></svg></button>
          <button aria-label="Profil"><svg width="22" height="22" viewBox="0 0 22 22"><clipPath id="face"><circle cx="11" cy="11" r="11" /></clipPath><g clip-path="url(#face)"><path d="M0 0h22v22H0z" fill="#e6e2db" /><path d="M2 22q0-8 7-9h4q7 1 7 9z" fill="#8fa6c4" /><path d="M8 12h6v3l-3 3-3-3z" fill="#e9eef5" /><ellipse cx="11" cy="8" rx="4" ry="5.5" fill="#5a4238" /><path d="M10 15h2l1 7h-4z" fill="#2b3a5a" /></g></svg></button>
          <button aria-label="Menu"><svg width="16" height="16" viewBox="0 0 16 16"><g fill="#fff"><circle cx="8" cy="3" r="1.7" /><circle cx="8" cy="8" r="1.7" /><circle cx="8" cy="13" r="1.7" /></g></svg></button>
        </div>
      </div>
      <nav class="marks">
        <a v-for="b in bookmarks" :key="b.icon" href="#"><svg width="16" height="16" viewBox="0 0 16 16" v-html="markIcons[b.icon]"></svg><span v-if="b.label">{{ b.label }}</span></a>
      </nav>

      <main class="gmail">
        <svg class="logo" width="188" height="141" viewBox="0 0 188 141">
          <path d="M15 12L94 71l79-59v129h-28V70l-51 37-51-37v71H15z" fill="#f1f3f4" />
          <path d="M6 7q-6 5-6 13v107q0 14 13 14h2.500V14z" fill="#2f7af6" />
          <path d="M182 7q6 5 6 13v107q0 14-13 14h-2.500V14z" fill="#00b658" />
          <path d="M15.500 0q8-1 15 4L94 52l63-48q8-5 15.500-4v14L94 72 15.500 14z" fill="#ff001c" />
          <path d="M6 7q4-6 9.500-7v14z" fill="#c5000f" />
          <path d="M182 7q-4-6-9.500-7v14z" fill="#ffba00" />
        </svg>
        <p class="brand"><b>Google</b> Workspace</p>
        <p class="loading">Chargement de l'affichage standard | <a href="#">Charger l'affichage HTML simplifié</a> (connexions bas débit)</p>
      </main>

      <footer class="downloads">
        <button class="file">
          <svg width="14" height="16" viewBox="0 0 14 16"><rect x=".5" y=".5" width="13" height="15" rx="1" fill="#2f74d8" stroke="#16305c" /><path d="M3 4h3.500v8H3zM7.500 5H11v6H7.500z" fill="#fff" /></svg>
          Rapport de....docx
        </button>
        <button class="more" aria-label="Options"><svg width="12" height="12" viewBox="0 0 12 12"><path d="M1.500 8L6 3.500 10.500 8" fill="none" stroke="#eee" stroke-width="1.8" /></svg></button>
        <button class="all">Tout afficher</button>
        <button class="shut" aria-label="Fermer la barre"><svg width="12" height="12" viewBox="0 0 12 12"><path d="M1.500 1.500l9 9M10.500 1.500l-9 9" stroke="#fff" stroke-width="1.8" /></svg></button>
      </footer>

      <div class="dialog" role="dialog" aria-labelledby="dlg">
        <h2 id="dlg">Activer la navigation au clavier ?</h2>
        <p>Vous pouvez parcourir les pages à l'aide d'un curseur de texte. Pour désactiver la navigation au clavier, appuyez sur F7.</p>
        <label class="ask">
          <span class="tick"><input v-model="neverAsk" type="checkbox"><svg v-if="neverAsk" width="16" height="16" viewBox="0 0 16 16"><path d="M4 8l3 3 5-6" fill="none" stroke="#fff" stroke-width="1.4" /></svg></span>
          Ne plus me demander
        </label>
        <div class="acts"><button>Annuler</button><button class="go">Activer</button></div>
      </div>
    </section>
  </div>
</template>

<style>
body { background: #000; }
</style>

<style scoped>
.desktop { display: grid; grid-template-columns: minmax(0, 1366fr) minmax(0, 1920fr); align-items: start; background: #000; font: 14px/20px "Noto Sans", "Open Sans", sans-serif; }
.desktop * { box-sizing: border-box; }
button { padding: 0; border: 0; background: none; color: inherit; font: inherit; display: flex; align-items: center; justify-content: center; }
h1, h2, p { margin: 0; font-weight: 400; }
svg { display: block; flex: none; overflow: visible; }
.tri { display: block; border: 4px solid transparent; border-top: 6px solid #0c0c0c; border-bottom: 0; }
.tri.light { border-width: 6px 5px 0; border-top-color: #f5f5f5; }
.tri.dim { border-top-color: #7d7d7d; }

.laptop { display: flex; flex-direction: column; aspect-ratio: 1366 / 768; overflow: hidden; }
.topbar { flex: none; height: 27px; display: grid; grid-template-columns: auto auto 1fr auto; align-items: center; background: #1d1d1d; color: #f0f0f0; padding: 0 14px 0 12px; position: relative; }
.app { gap: 6px; margin-left: 38px; }
.clock { position: absolute; left: 0; right: 0; text-align: center; pointer-events: none; }
.dot { display: inline-block; width: 8px; height: 8px; margin-left: 12px; margin-right: -20px; border-radius: 50%; background: #f2f2f2; vertical-align: 1px; }
.tray { grid-column: 4; gap: 10px; }

.writer { flex: 1; min-height: 0; display: flex; flex-direction: column; background: #3d3d3d; color: #999; }
.titlebar { flex: none; height: 37px; display: grid; grid-template-columns: 1fr auto 1fr; align-items: center; border-top: 1px solid #505050; border-bottom: 1px solid #282828; padding-right: 9px; }
.titlebar h1 { font-size: 15px; font-weight: 700; color: #959595; }
.win { display: flex; justify-content: flex-end; gap: 16px; }
.round { border-radius: 50%; background: #5c5c5c; }
.menubar { flex: none; height: 25px; display: flex; align-items: center; gap: 18px; padding: 0 9px 0 8px; border-bottom: 1px solid #383838; }
.closedoc { margin-left: auto; }
.toolbar { flex: none; height: 38px; display: flex; align-items: center; padding-left: 3px; }
.format { height: 39px; }
.grip { width: 3px; height: 23px; margin-right: 5px; background: repeating-linear-gradient(#8a8a8a 0 3px, transparent 3px 5px); }
.sep { width: 8px; height: 32px; background: linear-gradient(90deg, transparent 4px, #353535 4px 5px, transparent 5px); }
.pic { width: 33px; height: 34px; display: flex; align-items: center; justify-content: center; border-radius: 4px; }
.pic.on { background: #262626; box-shadow: inset 0 0 0 1px #1c1c1c; }
.drop { width: 11px; display: flex; justify-content: center; }
.combos { display: flex; gap: 8px; padding: 0 1px; }
.combo { display: flex; height: 34px; border: 1px solid #212121; border-radius: 4px; background: #323232; overflow: hidden; }
.combo input { flex: 1; min-width: 0; border: 0; padding: 0; margin: 0 8px 0 10px; background: none; color: #f2f2f2; font: inherit; }
.combo .it { font-style: italic; }
.combo button { width: 33px; background: #464646; border-left: 1px solid #212121; }
.wide { width: 143px; }
.size { width: 84px; }

.docarea { flex: 1; min-height: 0; display: flex; }
.canvas { flex: 1; min-width: 0; overflow: hidden; padding-top: 5px; }
.rulerrow { display: grid; grid-template-columns: 1fr auto 1fr; }
.tabkind { margin: 4px 0 0 8px; }
.page { width: 993px; margin: 25px auto 0; height: 1404px; border-top: 1px solid #555; padding: 118px; background: #fff; color: #000; font: 18px/21px "DejaVu Sans", sans-serif; box-shadow: 0 0 2px #666; }
.page p { white-space: nowrap; }
.page .end { text-align: right; }
.page .heading { text-align: center; }
.date { padding-left: 415px; }
mark { background: #ff0; color: #000; }
.page u { text-decoration: underline wavy #f00 1px; text-underline-offset: 2px; text-decoration-skip-ink: none; }
.page b { background: #c0c0c0; font-weight: 400; }
.corners { display: flex; justify-content: space-between; margin: -18px -18px 0; }
.corners i { width: 18px; height: 18px; border: 1px solid #ccc; border-width: 0 1px 1px 0; }
.corners i + i { border-width: 0 0 1px 1px; }
.scroll { width: 12px; padding: 5px 3px; background: #393939; }
.scroll i { display: block; height: 33%; border-radius: 3px; background: #b0b0b0; }
.sidebar { width: 8px; border-left: 1px solid #888; display: flex; align-items: center; }
.sidebar button { width: 7px; height: 73px; background: #989898; }
.sidebar button::before { content: ""; border: 4px solid transparent; border-left: 0; border-right: 5px solid #333; }

.status { flex: none; height: 21px; border-top: 1px solid #858585; display: grid; grid-template-columns: 171fr 246fr 193fr 206fr 68fr 29fr 29fr 29fr 124fr 76fr 143fr 52fr; font-size: 12px; line-height: 20px; color: #f2f2f2; background: #3d3d3d; }
.status > span { padding-left: 9px; white-space: nowrap; min-width: 0; border-right: 1px solid #383838; }
.status > span:last-child { border: 0; }
.status .mid { padding: 0; display: flex; align-items: center; justify-content: center; }
.views { gap: 8px; }
.zoomer { gap: 6px; }
.zoomer input { appearance: none; width: 97px; height: 10px; margin: 0; background: linear-gradient(#aaa, #aaa) 12px 50% / 1px 8px no-repeat, linear-gradient(#999, #999) 0 50% / 100% 2px no-repeat; }
.zoomer input::-webkit-slider-thumb { appearance: none; width: 10px; height: 10px; border-radius: 50%; background: #f5f5f5; }

.dock { flex: none; height: 62px; display: flex; align-items: center; gap: 8px; padding: 0 4px; background: #241720; }
.launcher { width: 58px; height: 58px; border-radius: 4px; position: relative; }
.launcher.active { background: #4d404a; }
.running::after { content: ""; position: absolute; bottom: 0; left: 26px; width: 6px; height: 6px; border-radius: 50%; background: #e95420; }
.apps { margin-left: auto; }

.browser { position: relative; display: flex; flex-direction: column; aspect-ratio: 1920 / 1080; background: #353535; color: #eee; overflow: hidden; }
.tabs { flex: none; height: 34px; display: flex; background: #000; padding: 0 12px 0 8px; }
.tab { width: 240px; border-radius: 8px 8px 0 0; background: #353535; display: flex; align-items: center; gap: 8px; padding: 0 11px 0 12px; }
.tab button { margin-left: auto; }
.newtab { width: 44px; }
.wm { margin-left: auto; display: flex; gap: 22px; }
.nav { flex: none; height: 38px; display: flex; align-items: center; gap: 16px; padding: 0 14px; }
.omni { flex: 1; height: 30px; margin-left: -2px; border-radius: 15px; background: #202124; display: flex; align-items: center; gap: 10px; padding: 0 10px; }
.omni input { flex: 1; border: 0; padding: 0; background: none; color: #eee; font: inherit; outline: 0; }
.exts { display: flex; align-items: center; gap: 16px; }
.exts button { width: 16px; }
.marks { flex: none; height: 33px; display: flex; align-items: flex-start; gap: 19px; padding: 4px 12px 0; border-bottom: 1px solid #6a6a6a; }
.marks a { display: flex; align-items: center; gap: 8px; height: 20px; color: #eee; text-decoration: none; white-space: nowrap; }
.gmail { flex: 1; min-height: 0; display: flex; flex-direction: column; align-items: center; background: #fff; color: #000; padding: 311px 20px 28px; }
.brand { margin-top: 84px; font: 32px/48px Lato, sans-serif; color: #e3e5e7; }
.brand b { font-weight: 400; -webkit-text-stroke: 1px #e3e5e7; }
.loading { margin-top: auto; align-self: flex-end; font: 12px/16px "Liberation Sans", sans-serif; }
.loading a { color: #2200e8; }
.downloads { flex: none; height: 61px; display: flex; align-items: center; border-top: 1px solid #6a6a6a; padding: 0 12px 0 21px; }
.file { gap: 14px; font-size: 16px; }
.more { width: 54px; height: 48px; border-right: 1px solid #777; }
.all { margin-left: auto; width: 122px; height: 34px; border: 1px solid #ddd; border-radius: 4px; color: #5c94f0; font-weight: 600; }
.shut { margin-left: 12px; }
.dialog { position: absolute; top: 69px; left: 0; right: 0; margin: 0 auto; width: 448px; padding: 17px 16px 16px; border-radius: 4px; background: #fff; color: #202124; box-shadow: 0 1px 4px rgba(0, 0, 0, .5); }
.dialog h2 { font-size: 17px; line-height: 22px; }
.dialog p { margin-top: 10px; padding-right: 16px; font-size: 15px; line-height: 22px; }
.ask { margin-top: 12px; display: flex; align-items: center; gap: 12px; }
.tick { position: relative; width: 16px; height: 16px; }
.tick input { appearance: none; display: block; width: 16px; height: 16px; margin: 0; border: 1px solid #0062ea; border-radius: 3px; }
.tick input:checked { background: #0062ea; }
.tick svg { position: absolute; left: 0; top: 0; pointer-events: none; }
.acts { margin-top: 28px; display: flex; justify-content: flex-end; gap: 8px; }
.acts button { width: 88px; height: 34px; border: 1px solid #dadce0; border-radius: 4px; color: #0062ea; font-weight: 600; }
.acts .go { background: #0062ea; border-color: #0062ea; color: #fff; }
</style>
